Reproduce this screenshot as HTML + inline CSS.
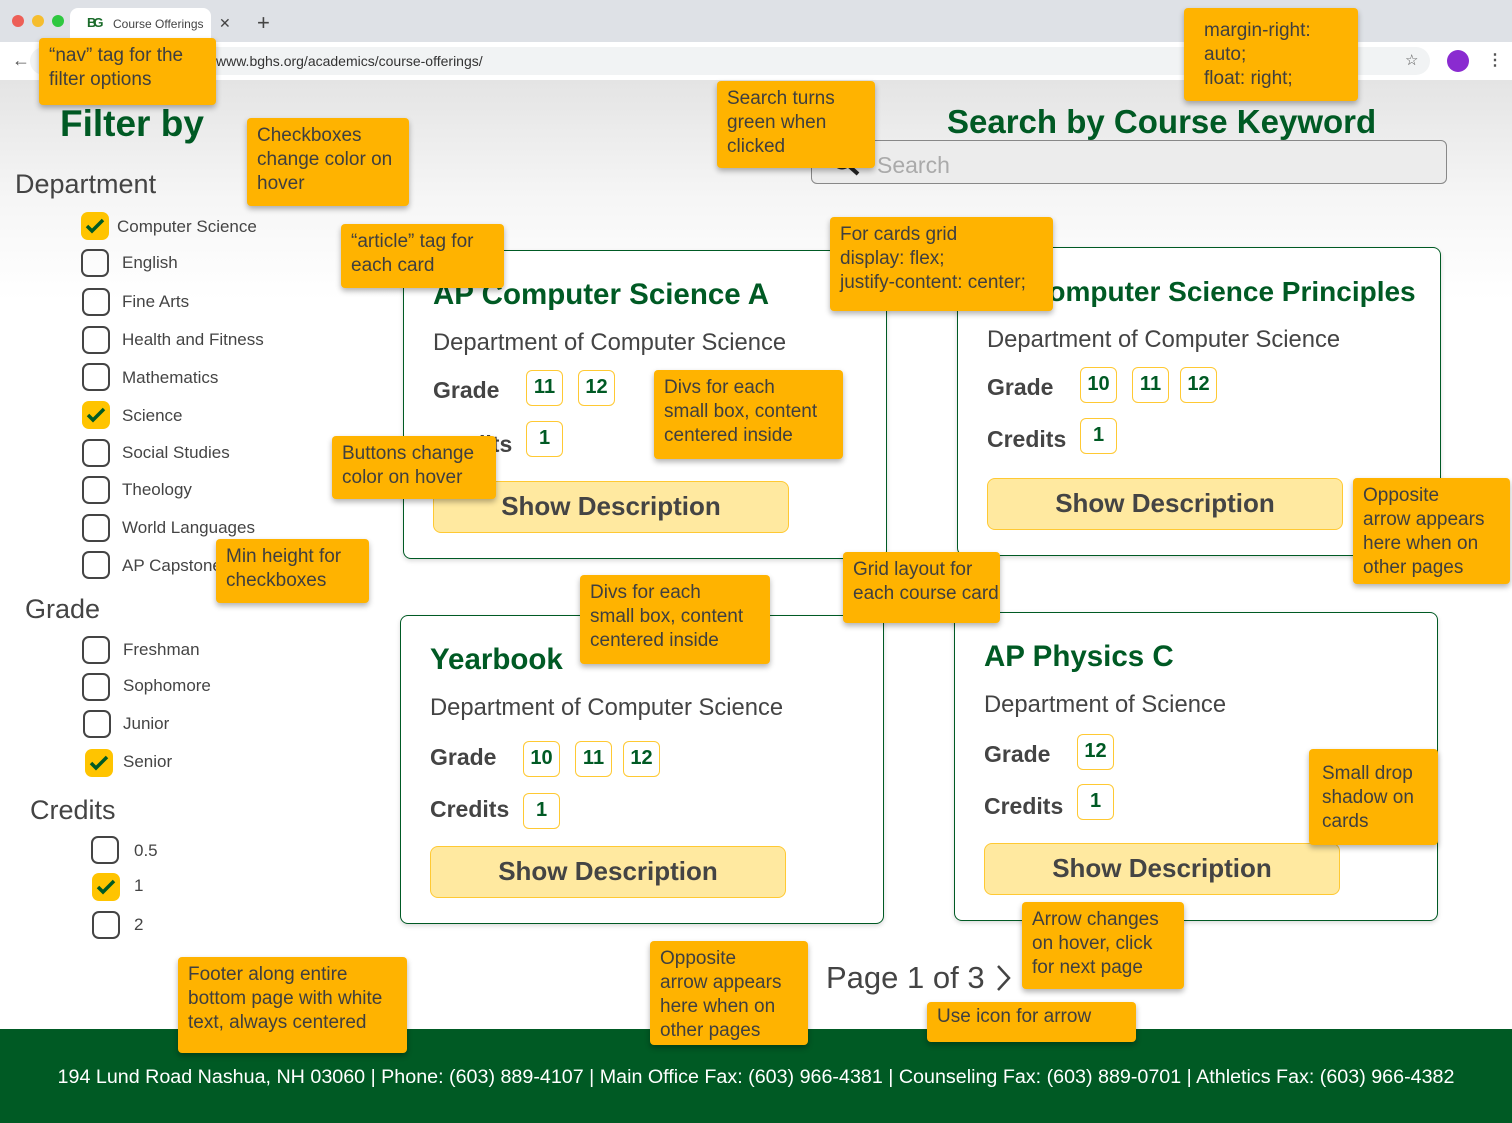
<!DOCTYPE html>
<html><head><meta charset="utf-8"><style>
*{box-sizing:border-box;margin:0;padding:0}
body{width:1512px;height:1123px;overflow:hidden;position:relative;font-family:"Liberation Sans",sans-serif;color:#444;background:linear-gradient(#e4e4e4 80px,#f6f6f6 200px,#fff 300px)}
.a{position:absolute;white-space:nowrap}
.g{color:#005a24;font-weight:bold}
.note{position:absolute;background:#ffb300;color:#3f3f3f;font-size:19px;line-height:24px;padding:6px 10px;border-radius:4px;box-shadow:0 3px 6px rgba(0,0,0,.3);white-space:nowrap;z-index:5}
.cb{position:absolute;width:28px;height:28px;border:2px solid #444;border-radius:7px}
.cb.on{border:none;background:#ffc400}
.cb.on svg{position:absolute;left:3px;top:3px}
.lbl{position:absolute;font-size:17px;line-height:20px;color:#444}
.card{position:absolute;width:484px;height:309px;border:1.5px solid #005a24;border-radius:8px;background:#fff;box-shadow:0 2px 5px rgba(0,0,0,.15)}
.card .t{position:absolute;left:29px;top:27px;font-size:29.5px;font-weight:bold;color:#005a24;white-space:nowrap}
.card .d{position:absolute;left:29px;top:78px;font-size:23.8px;white-space:nowrap}
.card .gl{position:absolute;left:29px;font-size:23px;font-weight:bold}
.bx{position:absolute;width:37px;height:36px;border:1.5px solid #ffc933;border-radius:6px;color:#005a24;font-weight:bold;font-size:20px;text-align:center;line-height:33px;background:#fff}
.btn{position:absolute;left:29px;top:230px;width:356px;height:52px;background:#ffe9a0;border:1.5px solid #ffc933;border-radius:8px;text-align:center;font-size:26px;font-weight:bold;line-height:49px;color:#444}
</style></head><body>
<div class="a" style="left:0;top:0;width:1512px;height:42px;background:#dee1e6"></div>
<div class="a" style="left:12px;top:15px;width:12px;height:12px;border-radius:50%;background:#ed5f57"></div>
<div class="a" style="left:32px;top:15px;width:12px;height:12px;border-radius:50%;background:#f5bd2e"></div>
<div class="a" style="left:52px;top:15px;width:12px;height:12px;border-radius:50%;background:#2ec840"></div>
<div class="a" style="left:70px;top:8px;width:141px;height:34px;background:#fff;border-radius:8px 8px 0 0"></div>
<div class="a" style="left:87px;top:15px;font-size:13px;font-weight:bold;color:#1a6b2a;letter-spacing:-3px">BG</div>
<div class="a" style="left:113px;top:17px;font-size:12px;color:#444">Course Offerings</div>
<div class="a" style="left:219px;top:15px;font-size:14px;color:#444">✕</div>
<div class="a" style="left:257px;top:10px;font-size:22px;color:#444">+</div>
<div class="a" style="left:0;top:42px;width:1512px;height:38px;background:#fff"></div>
<div class="a" style="left:30px;top:47px;width:1400px;height:28px;background:#f1f3f4;border-radius:14px"></div>
<div class="a" style="left:12px;top:50px;font-size:18px;color:#555">←</div>
<div class="a" style="left:216px;top:53px;font-size:14px;color:#333">www.bghs.org/academics/course-offerings/</div>
<div class="a" style="left:1405px;top:51px;font-size:15px;color:#555">☆</div>
<div class="a" style="left:1447px;top:50px;width:22px;height:22px;border-radius:50%;background:#8a2bd0"></div>
<div class="a" style="left:1487px;top:50px;font-size:16px;color:#555;font-weight:bold">⋮</div>

<div class="a g" style="left:60px;top:103px;font-size:37px">Filter by</div>
<div class="a" style="left:15px;top:169px;font-size:27px">Department</div>
<div class="cb on" style="left:81px;top:212px"><svg width="22" height="22" viewBox="0 0 22 22"><path d="M3 11l5 5L19 5" stroke="#005a24" stroke-width="3.5" fill="none"/></svg></div><div class="lbl" style="left:117px;top:217px">Computer Science</div>
<div class="cb" style="left:81px;top:249px"></div><div class="lbl" style="left:122px;top:253px">English</div>
<div class="cb" style="left:82px;top:288px"></div><div class="lbl" style="left:122px;top:292px">Fine Arts</div>
<div class="cb" style="left:82px;top:326px"></div><div class="lbl" style="left:122px;top:330px">Health and Fitness</div>
<div class="cb" style="left:82px;top:363px"></div><div class="lbl" style="left:122px;top:368px">Mathematics</div>
<div class="cb on" style="left:82px;top:401px"><svg width="22" height="22" viewBox="0 0 22 22"><path d="M3 11l5 5L19 5" stroke="#005a24" stroke-width="3.5" fill="none"/></svg></div><div class="lbl" style="left:122px;top:406px">Science</div>
<div class="cb" style="left:82px;top:439px"></div><div class="lbl" style="left:122px;top:443px">Social Studies</div>
<div class="cb" style="left:82px;top:476px"></div><div class="lbl" style="left:122px;top:480px">Theology</div>
<div class="cb" style="left:82px;top:514px"></div><div class="lbl" style="left:122px;top:518px">World Languages</div>
<div class="cb" style="left:82px;top:551px"></div><div class="lbl" style="left:122px;top:556px">AP Capstone</div>
<div class="a" style="left:25px;top:594px;font-size:27px">Grade</div>
<div class="cb" style="left:82px;top:636px"></div><div class="lbl" style="left:123px;top:640px">Freshman</div>
<div class="cb" style="left:82px;top:673px"></div><div class="lbl" style="left:123px;top:676px">Sophomore</div>
<div class="cb" style="left:83px;top:710px"></div><div class="lbl" style="left:123px;top:714px">Junior</div>
<div class="cb on" style="left:85px;top:749px"><svg width="22" height="22" viewBox="0 0 22 22"><path d="M3 11l5 5L19 5" stroke="#005a24" stroke-width="3.5" fill="none"/></svg></div><div class="lbl" style="left:123px;top:752px">Senior</div>
<div class="a" style="left:30px;top:795px;font-size:27px">Credits</div>
<div class="cb" style="left:91px;top:836px"></div><div class="lbl" style="left:134px;top:841px">0.5</div>
<div class="cb on" style="left:92px;top:873px"><svg width="22" height="22" viewBox="0 0 22 22"><path d="M3 11l5 5L19 5" stroke="#005a24" stroke-width="3.5" fill="none"/></svg></div><div class="lbl" style="left:134px;top:876px">1</div>
<div class="cb" style="left:92px;top:911px"></div><div class="lbl" style="left:134px;top:915px">2</div>

<div class="a g" style="left:947px;top:103px;font-size:33px">Search by Course Keyword</div>
<div class="a" style="left:811px;top:140px;width:636px;height:44px;border:1px solid #888;border-radius:6px;background:#ececec"></div>
<svg class="a" style="left:828px;top:146px" width="34" height="32" viewBox="0 0 34 32"><circle cx="14" cy="13" r="9" stroke="#222" stroke-width="3" fill="none"/><path d="M21 20l9 8" stroke="#222" stroke-width="4"/></svg>
<div class="a" style="left:877px;top:152px;font-size:23px;color:#aaa">Search</div>

<div class="card" style="left:403px;top:250px">
<div class="t">AP Computer Science A</div><div class="d">Department of Computer Science</div>
<div class="gl" style="top:126px">Grade</div><div class="bx" style="left:122px;top:119px">11</div><div class="bx" style="left:174px;top:119px">12</div>
<div class="gl" style="top:180px">Credits</div><div class="bx" style="left:122px;top:170px">1</div>
<div class="btn">Show Description</div></div>
<div class="card" style="left:957px;top:247px">
<div class="t" style="left:24px;font-size:28px;top:28px">AP Computer Science Principles</div><div class="d">Department of Computer Science</div>
<div class="gl" style="top:126px">Grade</div><div class="bx" style="left:122px;top:119px">10</div><div class="bx" style="left:174px;top:119px">11</div><div class="bx" style="left:222px;top:119px">12</div>
<div class="gl" style="top:178px">Credits</div><div class="bx" style="left:122px;top:170px">1</div>
<div class="btn">Show Description</div></div>
<div class="card" style="left:400px;top:615px">
<div class="t">Yearbook</div><div class="d">Department of Computer Science</div>
<div class="gl" style="top:128px">Grade</div><div class="bx" style="left:122px;top:125px">10</div><div class="bx" style="left:174px;top:125px">11</div><div class="bx" style="left:222px;top:125px">12</div>
<div class="gl" style="top:180px">Credits</div><div class="bx" style="left:122px;top:177px">1</div>
<div class="btn">Show Description</div></div>
<div class="card" style="left:954px;top:612px">
<div class="t">AP Physics C</div><div class="d">Department of Science</div>
<div class="gl" style="top:128px">Grade</div><div class="bx" style="left:122px;top:121px">12</div>
<div class="gl" style="top:180px">Credits</div><div class="bx" style="left:122px;top:171px">1</div>
<div class="btn">Show Description</div></div>

<div class="a" style="left:826px;top:960px;font-size:31px;color:#444">Page 1 of 3</div>
<svg class="a" style="left:994px;top:963px" width="20" height="30" viewBox="0 0 20 30"><path d="M4 3l11 12L4 27" stroke="#444" stroke-width="2.5" fill="none"/></svg>

<div class="a" style="left:0;top:1029px;width:1512px;height:94px;background:#005a24"></div>
<div class="a" style="left:0;top:1066px;width:1512px;text-align:center;color:#fff;font-size:19.7px">194 Lund Road Nashua, NH 03060 | Phone: (603) 889-4107 | Main Office Fax: (603) 966-4381 | Counseling Fax: (603) 889-0701 | Athletics Fax: (603) 966-4382</div>

<div class="note" style="left:39px;top:38px;width:177px;height:67px">“nav” tag for the<br>filter options</div>
<div class="note" style="left:247px;top:118px;width:162px;height:88px">Checkboxes<br>change color on<br>hover</div>
<div class="note" style="left:717px;top:81px;width:158px;height:87px">Search turns<br>green when<br>clicked</div>
<div class="note" style="left:1184px;top:8px;width:174px;height:93px;padding:11px 20px">margin-right:<br>auto;<br>float: right;</div>
<div class="note" style="left:341px;top:224px;width:163px;height:64px">“article” tag for<br>each card</div>
<div class="note" style="left:830px;top:217px;width:223px;height:94px">For cards grid<br>display: flex;<br>justify-content: center;</div>
<div class="note" style="left:654px;top:370px;width:189px;height:89px">Divs for each<br>small box, content<br>centered inside</div>
<div class="note" style="left:332px;top:436px;width:164px;height:63px">Buttons change<br>color on hover</div>
<div class="note" style="left:216px;top:539px;width:153px;height:64px">Min height for<br>checkboxes</div>
<div class="note" style="left:1353px;top:478px;width:157px;height:106px">Opposite<br>arrow appears<br>here when on<br>other pages</div>
<div class="note" style="left:580px;top:575px;width:190px;height:89px">Divs for each<br>small box, content<br>centered inside</div>
<div class="note" style="left:843px;top:552px;width:157px;height:71px">Grid layout for<br>each course card</div>
<div class="note" style="left:1309px;top:749px;width:129px;height:96px;padding:13px 13px">Small drop<br>shadow on<br>cards</div>
<div class="note" style="left:1022px;top:902px;width:162px;height:87px">Arrow changes<br>on hover, click<br>for next page</div>
<div class="note" style="left:927px;top:1002px;width:209px;height:40px;padding-top:3px">Use icon for arrow</div>
<div class="note" style="left:650px;top:941px;width:158px;height:104px">Opposite<br>arrow appears<br>here when on<br>other pages</div>
<div class="note" style="left:178px;top:957px;width:229px;height:96px">Footer along entire<br>bottom page with white<br>text, always centered</div>
</body></html>
